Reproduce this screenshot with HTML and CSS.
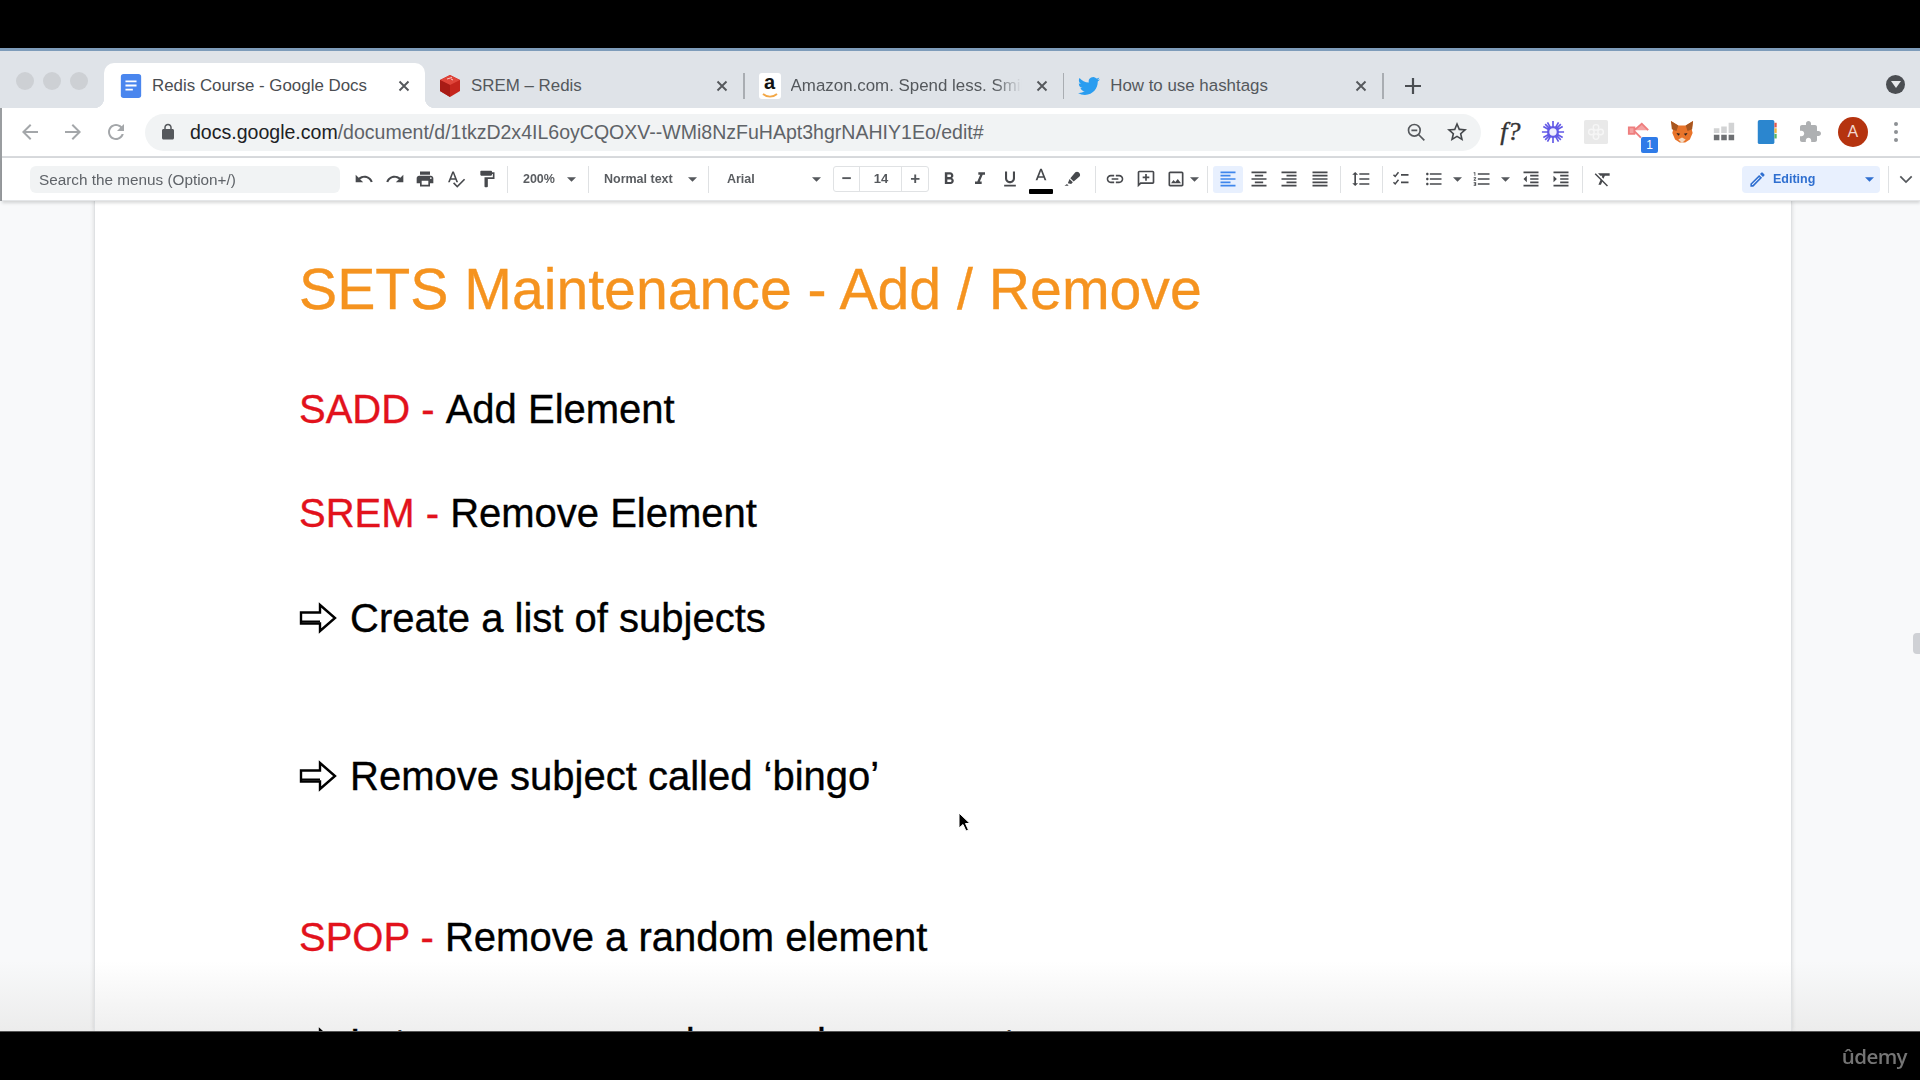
FILE: index.html
```html
<!DOCTYPE html>
<html lang="en">
<head>
<meta charset="utf-8">
<title>Redis Course - Google Docs</title>
<link rel="stylesheet" href="styles.css">
</head>
<body>
<svg class="sprite" xmlns="http://www.w3.org/2000/svg">
  <symbol id="x" viewBox="0 0 12 12"><path d="M1.5 1.5l9 9M10.5 1.5l-9 9" fill="none" stroke="currentColor" stroke-width="1.9"/></symbol>
  <symbol id="caret" viewBox="0 0 10 5"><path d="M0 0h10L5 5z"/></symbol>
  <symbol id="arrow" viewBox="0 0 38 32"><path d="M2 10.5h19V3l15 13-15 13v-7.500H2z" fill="#fff" stroke="#000" stroke-width="2.400"/><path d="M3 19.500h18" stroke="#000" stroke-width="2"/></symbol>
</svg>
<div class="bar-top"></div>
<div class="window">
  <div class="tabstrip">
    <div class="lights"><i class="light"></i><i class="light"></i><i class="light"></i></div>
    <div class="tab active">
      <svg class="fav" viewBox="0 0 22 26"><rect x="0" y="0" width="22" height="26" rx="3" fill="#4a86ee"/><path d="M5 8h12M5 12.5h12M5 17h8" stroke="#fff" stroke-width="2"/></svg>
      <span class="tab-title">Redis Course - Google Docs</span>
      <svg class="close"><use href="#x"/></svg>
    </div>
    <div class="tab">
      <svg class="fav" viewBox="0 0 22 24"><path d="M11 1l10 5v11l-10 6-10-6V6z" fill="#c5251d"/><path d="M1 6l10 5 10-5-10-5z" fill="#e0453a"/><path d="M11 11v12L1 17V6z" fill="#a81b15"/><path d="M8 5l5-1.500M12 5l2 1" stroke="#f7c6c2" stroke-width="1"/></svg>
      <span class="tab-title">SREM – Redis</span>
      <svg class="close"><use href="#x"/></svg>
    </div>
    <i class="tab-sep"></i>
    <div class="tab">
      <span class="fav-amz">a<svg class="smile" viewBox="0 0 16 5"><path d="M1 1c4 3.500 10 3.500 14 0" fill="none" stroke="#f3a847" stroke-width="1.800"/></svg></span>
      <span class="tab-title fade">Amazon.com. Spend less. Smile more.</span>
      <svg class="close"><use href="#x"/></svg>
    </div>
    <i class="tab-sep"></i>
    <div class="tab">
      <svg class="fav" viewBox="0 0 24 24"><path fill="#2a9df0" d="M23.95 4.57a10 10 0 0 1-2.82.77 4.96 4.96 0 0 0 2.16-2.72c-.95.55-2 .96-3.13 1.2a4.92 4.92 0 0 0-8.38 4.48C7.69 8.1 4.07 6.13 1.64 3.16a4.82 4.82 0 0 0-.67 2.48c0 1.71.87 3.21 2.19 4.1a4.9 4.9 0 0 1-2.23-.62v.06a4.92 4.92 0 0 0 3.95 4.83 5 5 0 0 1-2.21.08 4.94 4.94 0 0 0 4.6 3.42A9.87 9.87 0 0 1 0 19.54a13.9 13.9 0 0 0 7.55 2.21c9.05 0 14-7.5 14-14 0-.21 0-.42-.02-.63a9.94 9.94 0 0 0 2.46-2.55z"/></svg>
      <span class="tab-title">How to use hashtags</span>
      <svg class="close"><use href="#x"/></svg>
    </div>
    <i class="tab-sep"></i>
    <svg class="newtab" viewBox="0 0 16 16"><path d="M8 0v16M0 8h16" stroke="#4b4e52" stroke-width="2.200"/></svg>
    <span class="profile-menu"><i class="profile-caret"></i></span>
  </div>

  <div class="toolbar">
    <span class="nav dim"><svg class="ic22" viewBox="0 0 24 24"><path d="M20 11H7.830l5.590-5.590L12 4l-8 8 8 8 1.410-1.410L7.830 13H20v-2z"/></svg></span>
    <span class="nav dim"><svg class="ic22" viewBox="0 0 24 24"><path d="M12 4l-1.410 1.410L16.170 11H4v2h12.170l-5.580 5.590L12 20l8-8z"/></svg></span>
    <span class="nav dim"><svg class="ic22" viewBox="0 0 24 24"><path d="M17.650 6.350C16.200 4.900 14.210 4 12 4c-4.420 0-7.990 3.580-7.990 8s3.570 8 7.990 8c3.730 0 6.840-2.550 7.730-6h-2.080c-.82 2.330-3.040 4-5.650 4-3.310 0-6-2.690-6-6s2.690-6 6-6c1.660 0 3.140.69 4.220 1.780L13 11h7V4l-2.350 2.350z"/></svg></span>
    <div class="omnibox">
      <svg class="lock" viewBox="0 0 24 24"><path d="M18 8h-1V6c0-2.760-2.240-5-5-5S7 3.240 7 6v2H6c-1.100 0-2 .9-2 2v10c0 1.100.9 2 2 2h12c1.100 0 2-.9 2-2V10c0-1.100-.9-2-2-2zM9 8V6c0-1.660 1.340-3 3-3s3 1.340 3 3v2H9z"/></svg>
      <span class="url"><b class="host">docs.google.com</b>/document/d/1tkzD2x4IL6oyCQOXV--WMi8NzFuHApt3hgrNAHIY1Eo/edit#</span>
      <svg class="omni-zoom" viewBox="0 0 24 24"><circle cx="10" cy="10" r="7" fill="none" stroke="#55585c" stroke-width="2"/><path d="M15 15l7 7M6.500 10h7" stroke="#55585c" stroke-width="2"/></svg>
      <svg class="omni-star" viewBox="0 0 24 24"><path d="M22 9.240l-7.190-.62L12 2 9.190 8.630 2 9.240l5.460 4.730L5.820 21 12 17.270 18.180 21l-1.630-7.030L22 9.240zM12 15.400l-3.760 2.270 1-4.280-3.320-2.880 4.380-.38L12 6.100l1.710 4.040 4.380.38-3.320 2.880 1 4.280L12 15.400z"/></svg>
    </div>
    <div class="exts">
      <span class="ext ext-f">f?</span>
      <span class="ext"><svg class="ic26" viewBox="0 0 26 26"><path d="M13 1v24M1 13h24M4.500 4.500l17 17M21.500 4.500l-17 17M7 2.500l12 21M19 2.500l-12 21M2.500 7l21 12M2.500 19l21-12" stroke="#6259e6" stroke-width="1.800"/><circle cx="13" cy="13" r="6.500" fill="#6259e6"/><circle cx="13" cy="13" r="4" fill="#f0eefd"/></svg></span>
      <span class="ext"><svg class="ic26" viewBox="0 0 26 26"><rect width="26" height="26" rx="2" fill="#e9e9e9"/><g fill="none" stroke="#f6f6f6" stroke-width="1.500"><circle cx="13" cy="8" r="3"/><circle cx="8" cy="13" r="3"/><circle cx="18" cy="13" r="3"/><circle cx="13" cy="18" r="3"/></g></svg></span>
      <span class="ext ext-badged">
        <svg class="ic26" viewBox="0 0 26 26"><path d="M2 8h6v7H2zM8 11l8-7 7 7M8 12l7 7" fill="#f4a3a3" stroke="#ee7e7e" stroke-width="2"/></svg>
        <span class="badge">1</span>
      </span>
      <span class="ext"><svg class="ic26" viewBox="0 0 26 26"><path d="M1 1l8 5h8l8-5-1.500 9 1 4-3 7-5 3.500h-6l-5-3.500-3-7 1-4z" fill="#e8742a"/><path d="M1 1l8 5-2 6-5-2zM25 1l-8 5 2 6 5-2z" fill="#a8561f"/><path d="M9 21l4 4 4-4-4-2z" fill="#f2d7bf"/><path d="M7 14l4 1-2 2zM19 14l-4 1 2 2z" fill="#2b2320"/></svg></span>
      <span class="ext"><svg class="ic26" viewBox="0 0 26 26"><path d="M2 16h6v6H2zM10 16h6v6h-6zM18 16h6v6h-6z" fill="#6d6f72"/><path d="M2 9h6v5H2zM10 7h6v7h-6zM18 3h6v11h-6z" fill="#d2d3d4"/></svg></span>
      <span class="ext"><svg class="ic26" viewBox="0 0 26 26"><rect x="3" width="18" height="26" rx="2" fill="#2b86cf"/><path d="M21 3h2.500v5H21z" fill="#e25a4e"/><path d="M21 9h2.500v5H21z" fill="#efb43c"/><path d="M21 15h2.500v5H21z" fill="#5ab567"/></svg></span>
      <span class="ext"><svg class="ic24 grey" viewBox="0 0 24 24"><path d="M20.500 11H19V7c0-1.100-.9-2-2-2h-4V3.500C13 2.120 11.880 1 10.500 1S8 2.120 8 3.500V5H4c-1.100 0-1.990.9-1.990 2v3.800H3.500c1.490 0 2.700 1.210 2.700 2.700s-1.210 2.700-2.700 2.700H2V20c0 1.100.9 2 2 2h3.800v-1.500c0-1.490 1.210-2.700 2.700-2.700 1.490 0 2.700 1.210 2.700 2.700V22H17c1.100 0 2-.9 2-2v-4h1.500c1.380 0 2.500-1.120 2.500-2.500S21.880 11 20.500 11z"/></svg></span>
      <span class="ext"><span class="avatar">A</span></span>
      <span class="ext"><span class="dots"><i></i><i></i><i></i></span></span>
    </div>
  </div>

  <div class="docbar">
    <div class="menu-search">Search the menus (Option+/)</div>
    <div class="group g-first">
      <span class="tb"><svg class="ic" viewBox="0 0 24 24"><path d="M12.500 8c-2.650 0-5.050.99-6.900 2.600L2 7v9h9l-3.620-3.620c1.390-1.160 3.160-1.880 5.120-1.880 3.540 0 6.550 2.310 7.600 5.500l2.370-.78C21.080 11.030 17.150 8 12.500 8z"/></svg></span>
      <span class="tb"><svg class="ic" viewBox="0 0 24 24"><path d="M18.400 10.600C16.550 8.990 14.150 8 11.500 8c-4.650 0-8.580 3.030-9.960 7.220L3.900 16c1.050-3.190 4.050-5.500 7.600-5.500 1.950 0 3.730.72 5.120 1.880L13 16h9V7l-3.600 3.600z"/></svg></span>
      <span class="tb"><svg class="ic" viewBox="0 0 24 24"><path d="M19 8H5c-1.660 0-3 1.340-3 3v6h4v4h12v-4h4v-6c0-1.660-1.340-3-3-3zm-3 11H8v-5h8v5zm3-7c-.55 0-1-.45-1-1s.45-1 1-1 1 .45 1 1-.45 1-1 1zm-1-9H6v4h12V3z"/></svg></span>
      <span class="tb"><svg class="ic" viewBox="0 0 24 24"><path d="M12.450 16h2.090L9.430 3H7.570L2.460 16h2.090l1.120-3h5.640l1.140 3zm-6.020-5L8.500 5.480 10.570 11H6.430zm15.160.59l-8.090 8.090L9.830 16l-1.410 1.410 5.090 5.090L23 13l-1.410-1.410z"/></svg></span>
      <span class="tb"><svg class="ic" viewBox="0 0 24 24"><path d="M18 4V3c0-.55-.45-1-1-1H5c-.55 0-1 .45-1 1v4c0 .55.45 1 1 1h12c.55 0 1-.45 1-1V6h1v4H9v11c0 .55.45 1 1 1h2c.55 0 1-.45 1-1v-9h8V4h-3z"/></svg></span>
    </div>
    <i class="sep"></i>
    <div class="drop d-zoom"><span>200%</span><svg class="caret"><use href="#caret"/></svg></div>
    <i class="sep"></i>
    <div class="drop d-style"><span>Normal text</span><svg class="caret"><use href="#caret"/></svg></div>
    <i class="sep"></i>
    <div class="drop d-font"><span>Arial</span><svg class="caret"><use href="#caret"/></svg></div>
    <div class="size-box"><span class="sz-btn">−</span><span class="sz-val">14</span><span class="sz-btn">+</span></div>
    <div class="group g-format">
      <span class="tb"><svg class="ic" viewBox="0 0 24 24"><path d="M15.600 10.790c.97-.67 1.650-1.770 1.650-2.790 0-2.260-1.750-4-4-4H7v14h7.040c2.090 0 3.710-1.700 3.710-3.790 0-1.520-.86-2.820-2.150-3.420zM10 6.500h3c.83 0 1.500.67 1.500 1.500s-.67 1.500-1.500 1.500h-3v-3zm3.500 9H10v-3h3.500c.83 0 1.500.67 1.500 1.500s-.67 1.500-1.500 1.500z"/></svg></span>
      <span class="tb"><svg class="ic" viewBox="0 0 24 24"><path d="M10 4v3h2.210l-3.420 8H6v3h8v-3h-2.210l3.420-8H18V4z"/></svg></span>
      <span class="tb"><svg class="ic" viewBox="0 0 24 24"><path d="M12 17c3.310 0 6-2.690 6-6V3h-2.500v8c0 1.930-1.570 3.500-3.500 3.500S8.500 12.930 8.500 11V3H6v8c0 3.310 2.690 6 6 6zm-7 2v2h14v-2H5z"/></svg></span>
      <span class="tb tb-color"><svg class="ic" viewBox="0 0 24 24"><path d="M11 2L5.500 16h2.250l1.120-3h6.250l1.120 3h2.250L13 2h-2zm-1.380 9L12 4.670 14.380 11H9.620z"/></svg><i class="color-bar"></i></span>
      <span class="tb"><svg class="ic" viewBox="0 0 24 24"><path d="M10 11l6-7c1-1 3-1 4 0l1 1c1 1 1 3 0 4l-7 6zM9 12l4 4-2 2-4-1zM6 18l2 2H3z"/></svg></span>
    </div>
    <i class="sep s-wide"></i>
    <div class="group">
      <span class="tb"><svg class="ic" viewBox="0 0 24 24"><path d="M3.900 12c0-1.710 1.390-3.100 3.100-3.100h4V7H7c-2.760 0-5 2.240-5 5s2.240 5 5 5h4v-1.900H7c-1.710 0-3.100-1.390-3.100-3.100zM8 13h8v-2H8v2zm9-6h-4v1.900h4c1.710 0 3.100 1.390 3.100 3.100s-1.390 3.100-3.100 3.100h-4V17h4c2.760 0 5-2.240 5-5s-2.240-5-5-5z"/></svg></span>
      <span class="tb"><svg class="ic" viewBox="0 0 24 24"><path d="M20 2H4c-1.100 0-2 .9-2 2v18l4-4h14c1.100 0 2-.9 2-2V4c0-1.100-.9-2-2-2zm0 14H5.170L4 17.170V4h16v12zM11 14h2v-3h3V9h-3V6h-2v3H8v2h3z"/></svg></span>
      <span class="tb"><svg class="ic" viewBox="0 0 24 24"><path d="M19 5v14H5V5h14m0-2H5c-1.100 0-2 .9-2 2v14c0 1.100.9 2 2 2h14c1.100 0 2-.9 2-2V5c0-1.100-.9-2-2-2zm-4.860 8.860l-3 3.870L9 13.140 6 17h12l-3.860-5.140z"/></svg></span>
      <svg class="caret c-tight"><use href="#caret"/></svg>
    </div>
    <i class="sep s-wide"></i>
    <div class="group g-align">
      <span class="tb tb-on"><svg class="ic" viewBox="0 0 24 24"><path d="M15 15H3v2h12v-2zm0-8H3v2h12V7zM3 13h18v-2H3v2zm0 8h18v-2H3v2zM3 3v2h18V3H3z"/></svg></span>
      <span class="tb"><svg class="ic" viewBox="0 0 24 24"><path d="M7 15v2h10v-2H7zm-4 6h18v-2H3v2zm0-8h18v-2H3v2zm4-6v2h10V7H7zM3 3v2h18V3H3z"/></svg></span>
      <span class="tb"><svg class="ic" viewBox="0 0 24 24"><path d="M3 21h18v-2H3v2zm6-4h12v-2H9v2zm-6-4h18v-2H3v2zm6-4h12V7H9v2zM3 3v2h18V3H3z"/></svg></span>
      <span class="tb"><svg class="ic" viewBox="0 0 24 24"><path d="M3 21h18v-2H3v2zm0-4h18v-2H3v2zm0-4h18v-2H3v2zm0-4h18V7H3v2zm0-6v2h18V3H3z"/></svg></span>
    </div>
    <i class="sep"></i>
    <span class="tb"><svg class="ic" viewBox="0 0 24 24"><path d="M6 7h2.500L5 3.500 1.500 7H4v10H1.500L5 20.500 8.500 17H6V7zm4-2v2h12V5H10zm0 14h12v-2H10v2zm0-6h12v-2H10v2z"/></svg></span>
    <i class="sep"></i>
    <div class="group g-lists">
      <span class="tb tb-check"><svg class="ic" viewBox="0 0 24 24"><path d="M3 7l2 2 4-5M3 16l2 2 4-5" fill="none" stroke="currentColor" stroke-width="1.800"/><path d="M12 6h9v2h-9zM12 15h9v2h-9z"/></svg></span>
      <span class="tb"><svg class="ic" viewBox="0 0 24 24"><path d="M4 10.500c-.83 0-1.500.67-1.500 1.500s.67 1.500 1.500 1.500 1.500-.67 1.500-1.500-.67-1.500-1.500-1.500zm0-6c-.83 0-1.500.67-1.500 1.500S3.170 7.500 4 7.500 5.500 6.830 5.500 6 4.830 4.500 4 4.500zm0 12c-.83 0-1.500.68-1.500 1.500s.68 1.500 1.500 1.500 1.500-.68 1.500-1.500-.67-1.500-1.500-1.500zM7 19h14v-2H7v2zm0-6h14v-2H7v2zm0-8v2h14V5H7z"/></svg></span>
      <svg class="caret c-list"><use href="#caret"/></svg>
      <span class="tb"><svg class="ic" viewBox="0 0 24 24"><path d="M2 17h2v.5H3v1h1v.5H2v1h3v-4H2v1zm1-9h1V4H2v1h1v3zm-1 3h1.800L2 13.100v.9h3v-1H3.200L5 10.900V10H2v1zm5-6v2h14V5H7zm0 14h14v-2H7v2zm0-6h14v-2H7v2z"/></svg></span>
      <svg class="caret c-list"><use href="#caret"/></svg>
      <span class="tb"><svg class="ic" viewBox="0 0 24 24"><path d="M11 17h10v-2H11v2zm-8-5l4 4V8l-4 4zm0 9h18v-2H3v2zM3 3v2h18V3H3zm8 6h10V7H11v2zm0 4h10v-2H11v2z"/></svg></span>
      <span class="tb"><svg class="ic" viewBox="0 0 24 24"><path d="M3 21h18v-2H3v2zM3 8v8l4-4-4-4zm8 9h10v-2H11v2zM3 3v2h18V3H3zm8 6h10V7H11v2zm0 4h10v-2H11v2z"/></svg></span>
    </div>
    <i class="sep"></i>
    <span class="tb"><svg class="ic" viewBox="0 0 24 24"><path d="M6 5v.18L8.820 8h2.400l-.72 1.680 2.100 2.100L14.210 8H20V5H6zM3.270 5L2 6.270l6.970 6.970L6.500 19h3l1.570-3.660L16.730 21 18 19.730 3.550 5.270 3.270 5z"/></svg></span>
    <div class="editing">
      <svg class="pencil" viewBox="0 0 24 24"><path d="M3 17.250V21h3.750L17.810 9.940l-3.750-3.750L3 17.250zM5.920 19H5v-.92l9.060-9.060.92.92L5.920 19zM20.710 5.630l-2.340-2.340c-.2-.2-.45-.29-.71-.29s-.51.1-.7.29l-1.830 1.830 3.750 3.750 1.830-1.830c.39-.39.39-1.020 0-1.410z"/></svg>
      <span class="editing-label">Editing</span>
      <svg class="caret c-blue"><use href="#caret"/></svg>
    </div>
    <i class="sep s-end"></i>
    <svg class="chevron" viewBox="0 0 16 10"><path d="M1.500 1.500L8 8l6.500-6.500" fill="none" stroke="#55585c" stroke-width="2"/></svg>
  </div>

  <div class="docarea">
    <div class="page">
      <h1 class="title">SETS Maintenance - Add / Remove</h1>
      <p class="line l-sadd"><span class="cmd">SADD - </span>Add Element</p>
      <p class="line l-srem"><span class="cmd">SREM - </span>Remove Element</p>
      <p class="line l-create"><svg class="arrow"><use href="#arrow"/></svg>Create a list of subjects</p>
      <p class="line l-remove"><svg class="arrow"><use href="#arrow"/></svg>Remove subject called ‘bingo’</p>
      <p class="line l-spop"><span class="cmd">SPOP - </span>Remove a random element</p>
      <p class="line l-last"><svg class="arrow"><use href="#arrow"/></svg>Let us remove random verbs or count</p>
    </div>
    <i class="scroll-thumb"></i>
    <svg class="pointer" viewBox="0 0 14 21"><path d="M1 1v15l4-3.500 3 6.500 2.500-1-3-6.500H12z" fill="#000" stroke="#fff" stroke-width="1"/></svg>
  </div>
</div>
<div class="bar-bottom"><span class="udemy">ûdemy</span></div>
</body>
</html>
```
FILE: styles.css
```css
* { box-sizing: border-box; }
html, body { margin: 0; height: 100%; }
body {
  width: 1920px;
  height: 1080px;
  overflow: hidden;
  background: #000;
  display: flex;
  flex-direction: column;
  font-family: "Liberation Sans", Arial, sans-serif;
  color: #3c4043;
}
.sprite { display: none; }
i { display: block; font-style: normal; }
svg { display: block; flex: none; fill: currentColor; }

.bar-top { height: 48px; flex: none; background: #000; }
.bar-bottom {
  height: 49px;
  flex: none;
  background: #000;
  border-top: 1px solid #555;
  display: flex;
  justify-content: flex-end;
  align-items: center;
  padding: 0 13px 0 0;
}
.udemy {
  font-family: "Open Sans", sans-serif;
  font-size: 20.500px;
  font-weight: 600;
  letter-spacing: -.6px;
  color: #757575;
  filter: blur(.7px);
}

.window {
  flex: 1;
  min-height: 0;
  display: flex;
  flex-direction: column;
  border-left: 2px solid #9a9da0;
  filter: blur(.65px);
  background: #fff;
}

/* tab strip */
.tabstrip {
  height: 60px;
  flex: none;
  margin-left: -2px;
  background: #dfe3e8;
  border-top: 3px solid #7e9cba;
  display: flex;
  align-items: flex-end;
}
.lights {
  width: 104px;
  height: 45px;
  flex: none;
  display: flex;
  gap: 9px;
  padding: 9px 0 0 16px;
}
.light { width: 18px; height: 18px; border-radius: 50%; background: #cdd0d4; }
.tab {
  width: 318.100px;
  height: 45px;
  flex: none;
  display: flex;
  align-items: center;
  padding: 0 15px 0 14px;
  font-size: 16.900px;
  color: #54585c;
  position: relative;
}
.tab.active {
  width: 321px;
  padding-left: 16px;
  background: #fff;
  border-radius: 10px 10px 0 0;
  color: #4a4d51;
}
.tab.active::before, .tab.active::after {
  content: "";
  position: absolute;
  bottom: 0;
  width: 10px;
  height: 10px;
}
.tab.active::before { left: -10px; background: radial-gradient(circle at 0 0, transparent 10px, #fff 10.500px); }
.tab.active::after { right: -10px; background: radial-gradient(circle at 100% 0, transparent 10px, #fff 10.500px); }
.fav { width: 22px; height: 24px; margin-right: 10px; }
.fav-amz {
  width: 22px;
  height: 26px;
  margin-right: 10px;
  flex: none;
  border-radius: 3px;
  background: #fff;
  position: relative;
  color: #111;
  font-weight: 700;
  font-size: 20px;
  line-height: 19px;
  text-align: center;
}
.smile { position: absolute; left: 3px; bottom: 1px; width: 16px; height: 5px; }
.tab-title { flex: 1; min-width: 0; white-space: nowrap; overflow: hidden; }
.fade { -webkit-mask-image: linear-gradient(90deg, #000 88%, transparent 100%); mask-image: linear-gradient(90deg, #000 88%, transparent 100%); }
.close { width: 12px; height: 12px; margin-left: 14px; color: #55585c; }
.tab-sep { width: 1.500px; height: 26px; margin-bottom: 9px; background: #a9adb2; flex: none; }
.newtab { width: 16px; height: 16px; margin: 0 0 14px 21.500px; }
.profile-menu {
  width: 19px;
  height: 19px;
  margin: 0 15px 14px auto;
  border-radius: 50%;
  background: #4b4e52;
  display: flex;
  align-items: center;
  justify-content: center;
}
.profile-caret { width: 0; height: 0; border: 5px solid transparent; border-top: 7px solid #e6e8eb; border-bottom: 0; }

/* browser toolbar */
.toolbar {
  height: 50px;
  flex: none;
  background: #fff;
  border-bottom: 2px solid #d8dadd;
  display: flex;
  align-items: center;
  padding: 0 0 0 6px;
}
.nav { width: 43px; display: flex; justify-content: center; }
.dim { color: #a4a7aa; }
.ic22 { width: 24px; height: 24px; }
.omnibox {
  width: 1336px;
  height: 37px;
  flex: none;
  margin-left: 8px;
  background: #f1f3f4;
  border-radius: 19px;
  display: flex;
  align-items: center;
  padding: 0 12px 0 14px;
}
.lock { width: 18px; height: 18px; color: #55585c; margin-right: 13px; }
.url { font-size: 19.550px; color: #5f6368; white-space: nowrap; }
.host { font-weight: 400; color: #202124; }
.omni-zoom { width: 20px; height: 20px; margin-left: auto; }
.omni-star { width: 24px; height: 24px; margin-left: 19px; color: #45484c; }
.exts { display: flex; margin-left: 8px; }
.ext { width: 42.800px; height: 34px; display: flex; align-items: center; justify-content: center; position: relative; }
.ext-f {
  font-family: "Liberation Serif", serif;
  font-style: italic;
  font-size: 26px;
  color: #333;
  -webkit-text-stroke: .4px #333;
}
.ic26 { width: 24px; height: 24px; }
.ic24 { width: 24px; height: 24px; }
.grey { color: #aeb0b2; }
.badge {
  position: absolute;
  right: 2px;
  bottom: -4px;
  width: 17px;
  height: 16px;
  border-radius: 2px;
  background: #2f7be8;
  color: #fff;
  font-size: 12px;
  line-height: 16px;
  text-align: center;
}
.avatar {
  width: 30px;
  height: 30px;
  border-radius: 50%;
  background: #b5330f;
  color: #f3d8cf;
  font-size: 16px;
  line-height: 30px;
  text-align: center;
}
.dots { display: flex; flex-direction: column; gap: 4px; }
.dots i { width: 4px; height: 4px; border-radius: 50%; background: #8d9094; }

/* docs toolbar */
.docbar {
  height: 43px;
  flex: none;
  background: #fff;
  border-bottom: 1px solid #e4e6e8;
  box-shadow: 0 2px 3px rgba(60, 64, 67, .2);
  position: relative;
  z-index: 2;
  display: flex;
  align-items: center;
  padding: 0 0 0 28px;
}
.menu-search {
  width: 310px;
  height: 27px;
  flex: none;
  background: #f1f3f4;
  border-radius: 6px;
  padding-left: 9px;
  font-size: 15.300px;
  line-height: 27px;
  color: #5f6368;
}
.group { display: flex; align-items: center; }
.g-first { margin-left: 9px; }
.tb { width: 30.600px; height: 27px; flex: none; display: flex; align-items: center; justify-content: center; position: relative; color: #47494d; }
.ic { width: 20px; height: 20px; }
.sep { width: 1px; height: 27px; margin: 0 5px; background: #dfe1e3; flex: none; }
.s-wide { margin: 0 4px 0 8px; }
.s-end { margin: 0 0 0 8px; }
.drop { height: 27px; flex: none; display: flex; align-items: center; justify-content: space-between; font-size: 12.500px; font-weight: 700; color: #5a5d61; }
.d-zoom { width: 70px; padding: 0 7px 0 10px; }
.d-style { width: 109px; padding: 0 6px 0 10px; }
.d-font { width: 113px; padding: 0 6px 0 13px; }
.caret { width: 9px; height: 5px; color: #55585c; flex: none; }
.c-tight { margin-left: -2px; }
.c-list { margin: 0 5px 0 4px; }
.size-box {
  width: 96px;
  height: 26px;
  flex: none;
  margin-left: 6px;
  border: 1px solid #e0e2e4;
  border-radius: 3px;
  display: flex;
  font-size: 13px;
  font-weight: 700;
  color: #55585c;
  line-height: 24px;
  text-align: center;
}
.sz-btn { flex: 1; font-size: 17px; }
.sz-val { width: 43px; flex: none; border-left: 1px solid #e0e2e4; border-right: 1px solid #e0e2e4; }
.g-format { margin-left: 5px; }
.tb-color .ic { margin-top: -5px; }
.color-bar { position: absolute; left: 3px; right: 3px; bottom: -1px; height: 5px; background: #000; border-radius: 1px; }
.g-align { margin-left: 1px; }
.tb-on { background: #e8f0fe; border-radius: 3px; color: #3f86ec; }
.g-lists { margin-left: -2px; }
.tb-check { margin-right: 2px; }
.editing {
  width: 138px;
  height: 27px;
  flex: none;
  margin-left: auto;
  background: #e8f0fe;
  border-radius: 4px;
  display: flex;
  align-items: center;
  padding: 0 6px 0 6px;
  color: #2f6fd0;
  font-size: 12.500px;
  font-weight: 700;
}
.pencil { width: 19px; height: 19px; }
.editing-label { margin-left: 6px; flex: 1; }
.c-blue { color: #2f6fd0; }
.chevron { width: 14px; height: 9px; margin: 0 7px 0 10px; }

/* document */
.docarea {
  flex: 1;
  min-height: 0;
  margin-left: -2px;
  background: linear-gradient(180deg, #f8f9fa calc(100% - 70px), #ececec 100%);
  overflow: hidden;
  position: relative;
  padding-left: 94px;
}
.page {
  width: 1698px;
  height: 100%;
  background: linear-gradient(180deg, #fff calc(100% - 70px), #efefef 100%);
  border-left: 1px solid #dfe1e3;
  border-right: 1px solid #dfe1e3;
  box-shadow: 0 0 4px rgba(60, 64, 67, .18);
  padding: 55px 0 0 204px;
  color: #000;
  -webkit-text-stroke: .35px currentColor;
}
.title { margin: 0; font-size: 57.200px; line-height: 66px; font-weight: 400; color: #f5931f; white-space: nowrap; }
.line { margin: 0; font-size: 40px; line-height: 46px; white-space: nowrap; display: flex; align-items: center; }
.cmd { color: #e2121c; white-space: pre; }
.l-sadd { margin-top: 64px; }
.l-srem { margin-top: 58px; }
.l-create { margin-top: 59px; }
.l-remove { margin-top: 112px; }
.l-spop { margin-top: 115px; }
.l-last { margin-top: 60px; }
.arrow { width: 38px; height: 32px; margin-right: 13px; }
.scroll-thumb {
  position: absolute;
  right: 0;
  top: 432px;
  width: 7px;
  height: 21px;
  border-radius: 4px 0 0 4px;
  background: #cfd1d5;
}
.pointer { position: absolute; left: 958px; top: 611px; width: 14px; height: 21px; }
```
